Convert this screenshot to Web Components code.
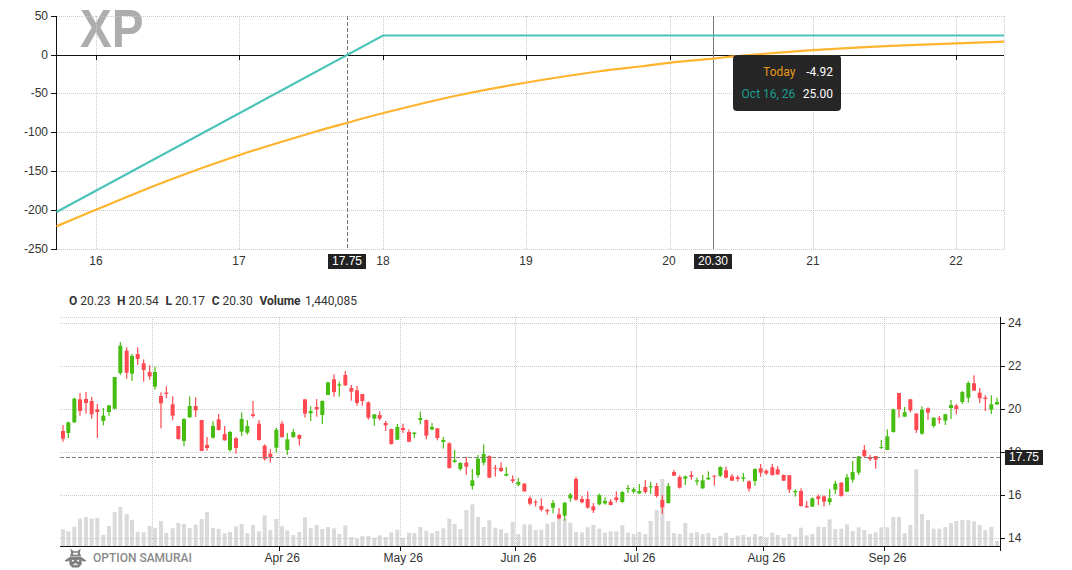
<!DOCTYPE html>
<html lang="en"><head><meta charset="utf-8"><title>XP</title>
<style>
html,body{margin:0;padding:0;background:#fff}
body{width:1072px;height:570px;overflow:hidden;font-family:"Liberation Sans",sans-serif;color:#333}
</style></head>
<body>
<xp-app>
  <payoff-chart symbol="XP">
    <chart-tag slot="tags" style="--x:328px;--y:254px">17.75</chart-tag>
    <chart-tag slot="tags" style="--x:694px;--y:254px">20.30</chart-tag>
    <payoff-tooltip slot="tip" style="--x:733px;--y:55px"></payoff-tooltip>
  </payoff-chart>
  <ohlc-legend></ohlc-legend>
  <candle-chart>
    <chart-tag slot="tags" style="--x:1005px;--y:137px">17.75</chart-tag>
    <brand-mark slot="brand">OPTION SAMURAI</brand-mark>
  </candle-chart>
</xp-app>
<script>
function ln(x1,y1,x2,y2,s,w,d){return `<line x1="${x1}" y1="${y1}" x2="${x2}" y2="${y2}" stroke="${s}" stroke-width="${w||1}"${d?` stroke-dasharray="${d}"`:''}/>`}
function tx(x,y,t,a,extra){return `<text x="${x}" y="${y}" text-anchor="${a||'middle'}" ${extra||''}>${t}</text>`}
const DOT='1 1',GC='#c9c9c9';
class XpApp extends HTMLElement{
  constructor(){super();this.attachShadow({mode:'open'}).innerHTML=`<style>:host{display:flex;flex-direction:column;width:1072px;height:570px}</style><slot></slot>`}
}
class ChartTag extends HTMLElement{
  constructor(){super();this.attachShadow({mode:'open'}).innerHTML=`<style>:host{position:absolute;left:var(--x);top:var(--y);display:block;box-sizing:border-box;width:38px;height:15px;background:#222;color:#fff;font:12px/15px "Liberation Sans",sans-serif;text-align:center}</style><slot></slot>`}
}
class PayoffTooltip extends HTMLElement{
  constructor(){super();this.attachShadow({mode:'open'}).innerHTML=`<style>
  :host{position:absolute;left:var(--x);top:var(--y);display:grid;grid-template-columns:auto auto;justify-content:end;align-content:start;column-gap:7.5px;row-gap:8px;box-sizing:border-box;width:108px;height:56px;padding:10px 8px 0 0;background:#262626;border-radius:4px;font:12px/14px Roboto,sans-serif;color:#fff;text-align:right}
  .a{color:#e8981a}.b{color:#1b9e90}
  </style><span class="a">Today</span><span>-4.92</span><span class="b">Oct 16, 26</span><span>25.00</span>`}
}
class PayoffChart extends HTMLElement{
  constructor(){super();
    const ys=[[50,16],[0,55],[-50,93],[-100,132],[-150,171],[-200,210],[-250,249]];
    const xs=[[16,96.5],[17,239.5],[18,383.5],[19,526.5],[20,670.5],[21,813.5],[22,956.5]];
    let g='';
    for(const[,y]of ys) if(y!==55) g+=ln(57,y+.5,1004,y+.5,GC,1,DOT);
    for(const[,x]of xs) g+=ln(x,16,x,249,GC,1,DOT);
    g+=ln(1004.5,16,1004.5,249,GC,1,DOT);
    let lab='';
    for(const[v,y]of ys){lab+=tx(48,y+3.5,v,'end');g+=ln(51,y+.5,57,y+.5,'#111')}
    for(const[v,x]of xs){lab+=tx(v==20?669:v==19?526:x-.5,265,v);g+=ln(x,55,x,60,'#111')}
    const orange=[[56.5,226.3],[96.5,209.5],[168,180.5],[239.5,155],[311,133],[347.5,122.7],[383.5,113],[455,96],[526.5,82.5],[598,71.5],[640,66.5],[670.5,62.6],[713.5,58.6],[740,55.8],[813.5,50.2],[885,46.2],[956.5,43.4],[1004,41.6]];
    function smooth(p){let d=`M${p[0]}`;for(let i=0;i<p.length-1;i++){const a=p[Math.max(i-1,0)],b=p[i],c=p[i+1],e=p[Math.min(i+2,p.length-1)];d+=` C${b[0]+(c[0]-a[0])/6} ${b[1]+(c[1]-a[1])/6} ${c[0]-(e[0]-b[0])/6} ${c[1]-(e[1]-b[1])/6} ${c[0]} ${c[1]}`}return d}
    this.attachShadow({mode:'open'}).innerHTML=`<style>
    :host{display:block;position:relative;width:1072px;height:285px;flex:none}
    svg{display:block;font:12px "Liberation Sans",sans-serif;fill:#333}
    .xp{font:bold 53px "Liberation Sans",sans-serif;fill:#adadad}
    </style>
    <svg width="1072" height="285" viewBox="0 0 1072 285">
      <text class="xp" x="80" y="46.8" textLength="63.5" lengthAdjust="spacingAndGlyphs">${this.getAttribute('symbol')||'XP'}</text>
      ${g}
      ${ln(56.5,16,56.5,249,'#111')}
      ${ln(56.5,55.5,1004,55.5,'#111')}
      ${ln(347.5,16,347.5,249,'#777',1,'4 2')}
      ${ln(713.5,16,713.5,249,'#777')}
      <path d="M56.5 212 L383 35.5 L1004 35.5" fill="none" stroke="#4cc3b9" stroke-width="2.2"/>
      <path d="${smooth(orange)}" fill="none" stroke="#ffb32f" stroke-width="2.2"/>
      ${lab}
    </svg><slot name="tags"></slot><slot name="tip"></slot>`;
  }
}
class OhlcLegend extends HTMLElement{
  constructor(){super();
    const items=[['O','20.23'],['H','20.54'],['L','20.17'],['C','20.30'],['Volume','1,440,085']];
    this.attachShadow({mode:'open'}).innerHTML=`<style>
    :host{display:flex;flex:none;height:28px;padding:8px 0 0 69px;box-sizing:border-box;gap:6.7px;font:12px/16px Roboto,sans-serif;color:#333}
    b{font-weight:700;margin-right:3px}
    span:last-child b{margin-right:4.5px}
    </style>`+items.map(([k,v])=>`<span><b>${k}</b>${v}</span>`).join('');
  }
}
class BrandMark extends HTMLElement{
  constructor(){super();this.attachShadow({mode:'open'}).innerHTML=`<style>
  :host{position:absolute;left:64px;bottom:2px;height:21px;display:flex;align-items:center;gap:6px;font:500 12px/14px Roboto,sans-serif;color:#8a8a8a}
  svg{display:block}
  </style>
  <svg width="23" height="20" viewBox="0 0 24 21" fill="#808080">
    <path d="M6.5 0.5 L10 3.5 L14 3.5 L17.5 0.5 L16.5 5 L18 9 L6 9 L7.5 5Z"/>
    <rect x="9.5" y="5" width="5" height="2" fill="#fff"/>
    <path d="M0.5 13 L6 9.5 L18 9.5 L23.5 13 L21 14.5 L18.5 13 L18.5 17 L15.5 20.5 L8.5 20.5 L5.5 17 L5.5 13 L3 14.5Z"/>
    <path d="M8 12 L11 13.5 L8.5 14.5Z M16 12 L13 13.5 L15.5 14.5Z M9.5 17.5 L12 15.8 L14.5 17.5 L14 18.5 L12 17.3 L10 18.5Z" fill="#fff"/>
  </svg><span><slot></slot></span>`}
}
const C=`r189 420 470 438 461|g205 410 459 412 444|g223 338 414 341 412|r240 324 392 343 378|r258 321 386 342 354|r275 336 401 348 388|r292 357 459 373 381|g310 369 421 392 408|g327 360 393 361 381|g344 276 373 276 371|g361 171 270 182 264|r380 187 281 197 263|g396 207 288 213 266|r413 187 240 207 222|r431 223 290 235 255|r449 241 284 261 274|g465 245 314 261 305|r483 322 430 333 355|r499 304 340 323 327|r518 334 406 358 392|r535 423 464 423 462|g552 400 483 402 468|g569 334 399 363 397|r587 337 396 363 376|r605 405 498 405 498|r621 456 497 480 489|g639 409 461 423 458|r656 387 437 403 435|r674 423 467 447 466|g690 438 500 441 495|r708 456 506 460 489|g725 382 453 402 440|g742 405 449 423 443|r759 348 398 388 393|r777 405 467 416 465|r794 478 527 482 522|r811 492 533 506 518|g829 429 503 434 488|r846 408 459 416 456|g862 444 510 463 495|g880 432 459 441 456|r898 448 482 450 461|r915 343 398 343 386|g932 364 408 378 385|r950 342 395 366 373|g967 346 417 348 390|g984 291 330 292 330|r1002 268 335 283 321|g1018 290 335 298 302|r1036 258 303 270 301|r1054 300 347 309 320|r1071 303 362 316 354`;
const D=`r7 327 362 327 348|r25 349 404 352 398|g43 388 422 388 401|r59 379 406 390 401|r77 408 438 414 421|r94 431 479 432 477|g112 417 465 426 464|r129 416 444 429 435|r147 433 472 441 470|g163 441 459 443 447|g181 380 418 399 405|r199 404 463 405 452|g216 414 436 426 433|r232 429 466 430 459|g250 456 491 465 471|r268 472 551 475 549|g284 495 534 526 531|g301 531 557 534 552|r319 516 569 533 545|g337 552 614 586 603|g354 510 578 521 570|g371 478 541 507 533|r388 511 579 513 578|r406 540 575 548 551|r423 532 561 548 558|g439 546 574 567 572|r458 571 594 583 588|g475 579 604 591 599|r493 594 620 596 619|r510 634 661 640 656|r527 644 665 650 653|r544 640 679 663 674|r562 671 689 675 679|g579 645 685 654 668|r597 669 703 688 700|g614 651 707 653 692|g631 624 650 629 640|r648 576 647 582 644|r666 633 655 642 652|r683 619 671 642 668|r700 654 684 664 676|g718 626 661 630 658|g735 637 659 648 655|r752 642 661 650 660|r769 619 652 637 645|g787 618 653 621 651|g804 600 624 609 612|g821 607 626 613 620|g838 597 627 618 625|r856 585 626 606 621|g872 590 627 604 607|r890 594 638 603 633|r907 630 686 645 667|g925 594 656 603 654|r942 555 573 561 572|r959 571 611 576 608|g976 572 600 574 581|r994 558 584 570 575|g1011 578 601 586 590|g1028 570 612 586 610|g1045 559 585 578 583|r1063 571 602 572 575`;
const E=`g25 544 576 546 572|r42 545 580 556 578|r60 567 588 574 587|r77 571 589 577 582|g94 564 590 577 581|r111 586 620 589 611|g129 550 602 552 588|r146 537 575 550 563|r163 553 570 557 565|r181 537 572 547 570|r197 543 570 553 568|r215 568 588 570 587|r232 570 624 571 614|g250 613 635 618 622|r267 610 665 618 663|r284 648 668 663 667|g301 637 666 640 665|r319 628 660 634 642|r336 631 665 634 650|g353 612 660 640 651|g370 587 627 596 614|r388 591 635 593 633|g405 567 621 577 620|g422 528 593 561 584|g440 513 570 514 563|r457 480 516 495 514|r474 510 528 516 522|r491 513 551 513 524|g508 465 492 486 489|g526 433 495 454 495|g544 371 443 373 441|r561 324 398 324 373|g578 366 396 382 395|r595 342 382 343 376|r613 384 444 386 435|g630 364 449 374 446|r648 367 405 370 383|g665 397 428 398 423|r682 393 416 400 404|g700 386 420 388 407|g717 345 402 360 369|r733 357 388 362 372|g751 318 357 321 351|g769 289 353 294 338|r786 271 318 295 317|r803 309 354 323 340|r820 331 378 338 342|g838 331 387 358 374|g855 338 360 351 358`;
const V=[733,739,725,701,696,701,699,750,723,681,666,687,705,740,742,723,729,708,744,730,714,717,729,719,702,681,729,732,745,741,724,717,744,720,739,691,735,702,724,736,750,741,697,729,720,732,726,730,747,721,756,761,753,753,758,751,756,742,734,759,743,744,726,737,744,738,730,701,717,732,675,658,696,726,706,728,733,744,711,747,718,718,735,734,716,711,692,701,713,741,742,727,720,731,743,739,739,721,743,747,741,747,708,675,582,708,744,747,714,744,741,747,744,758,752,743,759,752,750,755,747,753,757,743,750,758,747,755,728,751,747,725,726,703,732,731,718,738,727,735,747,742,727,727,696,696,744,720,553,687,705,731,731,726,714,708,705,706,709,720,735,726,768];
function parse(s,ox){return s.split('|').map(t=>{const[a,w1,w2,b1,b2]=t.split(' ');return{c:a[0],x:ox+(+a.slice(1))/3,w1:285+w1/3,w2:285+w2/3,b1:285+b1/3,b2:285+b2/3}})}
class CandleChart extends HTMLElement{
  constructor(){super();
    const cs=[...parse(C,0),...parse(D,360),...parse(E,712)];
    const RED='#ff4a52',GRN='#47bd12';
    let bars='',grid='',k='',lab='';
    cs.forEach((c,i)=>{const top=285+V[i]/3;bars+=`<rect x="${(c.x-2).toFixed(2)}" y="${top.toFixed(2)}" width="4" height="${(546-top).toFixed(2)}" fill="#dadada"/>`;
      const col=c.c=='r'?RED:GRN;
      k+=`<rect x="${(c.x-.6).toFixed(2)}" y="${c.w1.toFixed(2)}" width="1.2" height="${(c.w2-c.w1).toFixed(2)}" fill="${col}"/>`;
      k+=`<rect x="${(c.x-2).toFixed(2)}" y="${c.b1.toFixed(2)}" width="4" height="${Math.max(c.b2-c.b1,1).toFixed(2)}" fill="${col}"/>`;
    });
    for(const y of [317,323,366,409,452,495,538]) grid+=ln(60,y+.5,1000,y+.5,GC,1,DOT);
    for(const x of [152.5,279.5,400.5,515.5,636.5,763.5,884.5]) grid+=ln(x,317,x,546,GC,1,DOT);
    [[24,323],[22,366],[20,409],[18,452],[16,495],[14,538]].forEach(([v,y])=>{lab+=tx(1008,y+3.5,v,'start');grid+=ln(1000,y+.5,1005,y+.5,'#111')});
    [['Apr 26',264.5,279.5],['May 26',383.5,400.5],['Jun 26',500.5,515.5],['Jul 26',623.5,636.5],['Aug 26',747.5,763.5],['Sep 26',868.5,884.5]].forEach(([t,x,tk])=>{lab+=tx(x,562,t,'start');grid+=ln(tk,546,tk,551,'#111')});
    this.attachShadow({mode:'open'}).innerHTML=`<style>
    :host{display:block;position:relative;width:1072px;flex:1;min-height:0}
    svg{display:block;font:12px "Liberation Sans",sans-serif;fill:#333}
    </style>
    <svg width="1072" height="257" viewBox="0 313 1072 257">
      ${bars}${grid}
      ${ln(60,546.5,1000,546.5,'#111')}
      ${ln(1000.5,317,1000.5,551,'#111')}
      ${k}
      ${ln(60,457.5,1000,457.5,'#808080',1,'4 2')}
      ${lab}
    </svg><slot name="tags"></slot><slot name="brand"></slot>`;
  }
}
customElements.define('xp-app',XpApp);
customElements.define('chart-tag',ChartTag);
customElements.define('payoff-tooltip',PayoffTooltip);
customElements.define('payoff-chart',PayoffChart);
customElements.define('ohlc-legend',OhlcLegend);
customElements.define('brand-mark',BrandMark);
customElements.define('candle-chart',CandleChart);
</script>
</body></html>
